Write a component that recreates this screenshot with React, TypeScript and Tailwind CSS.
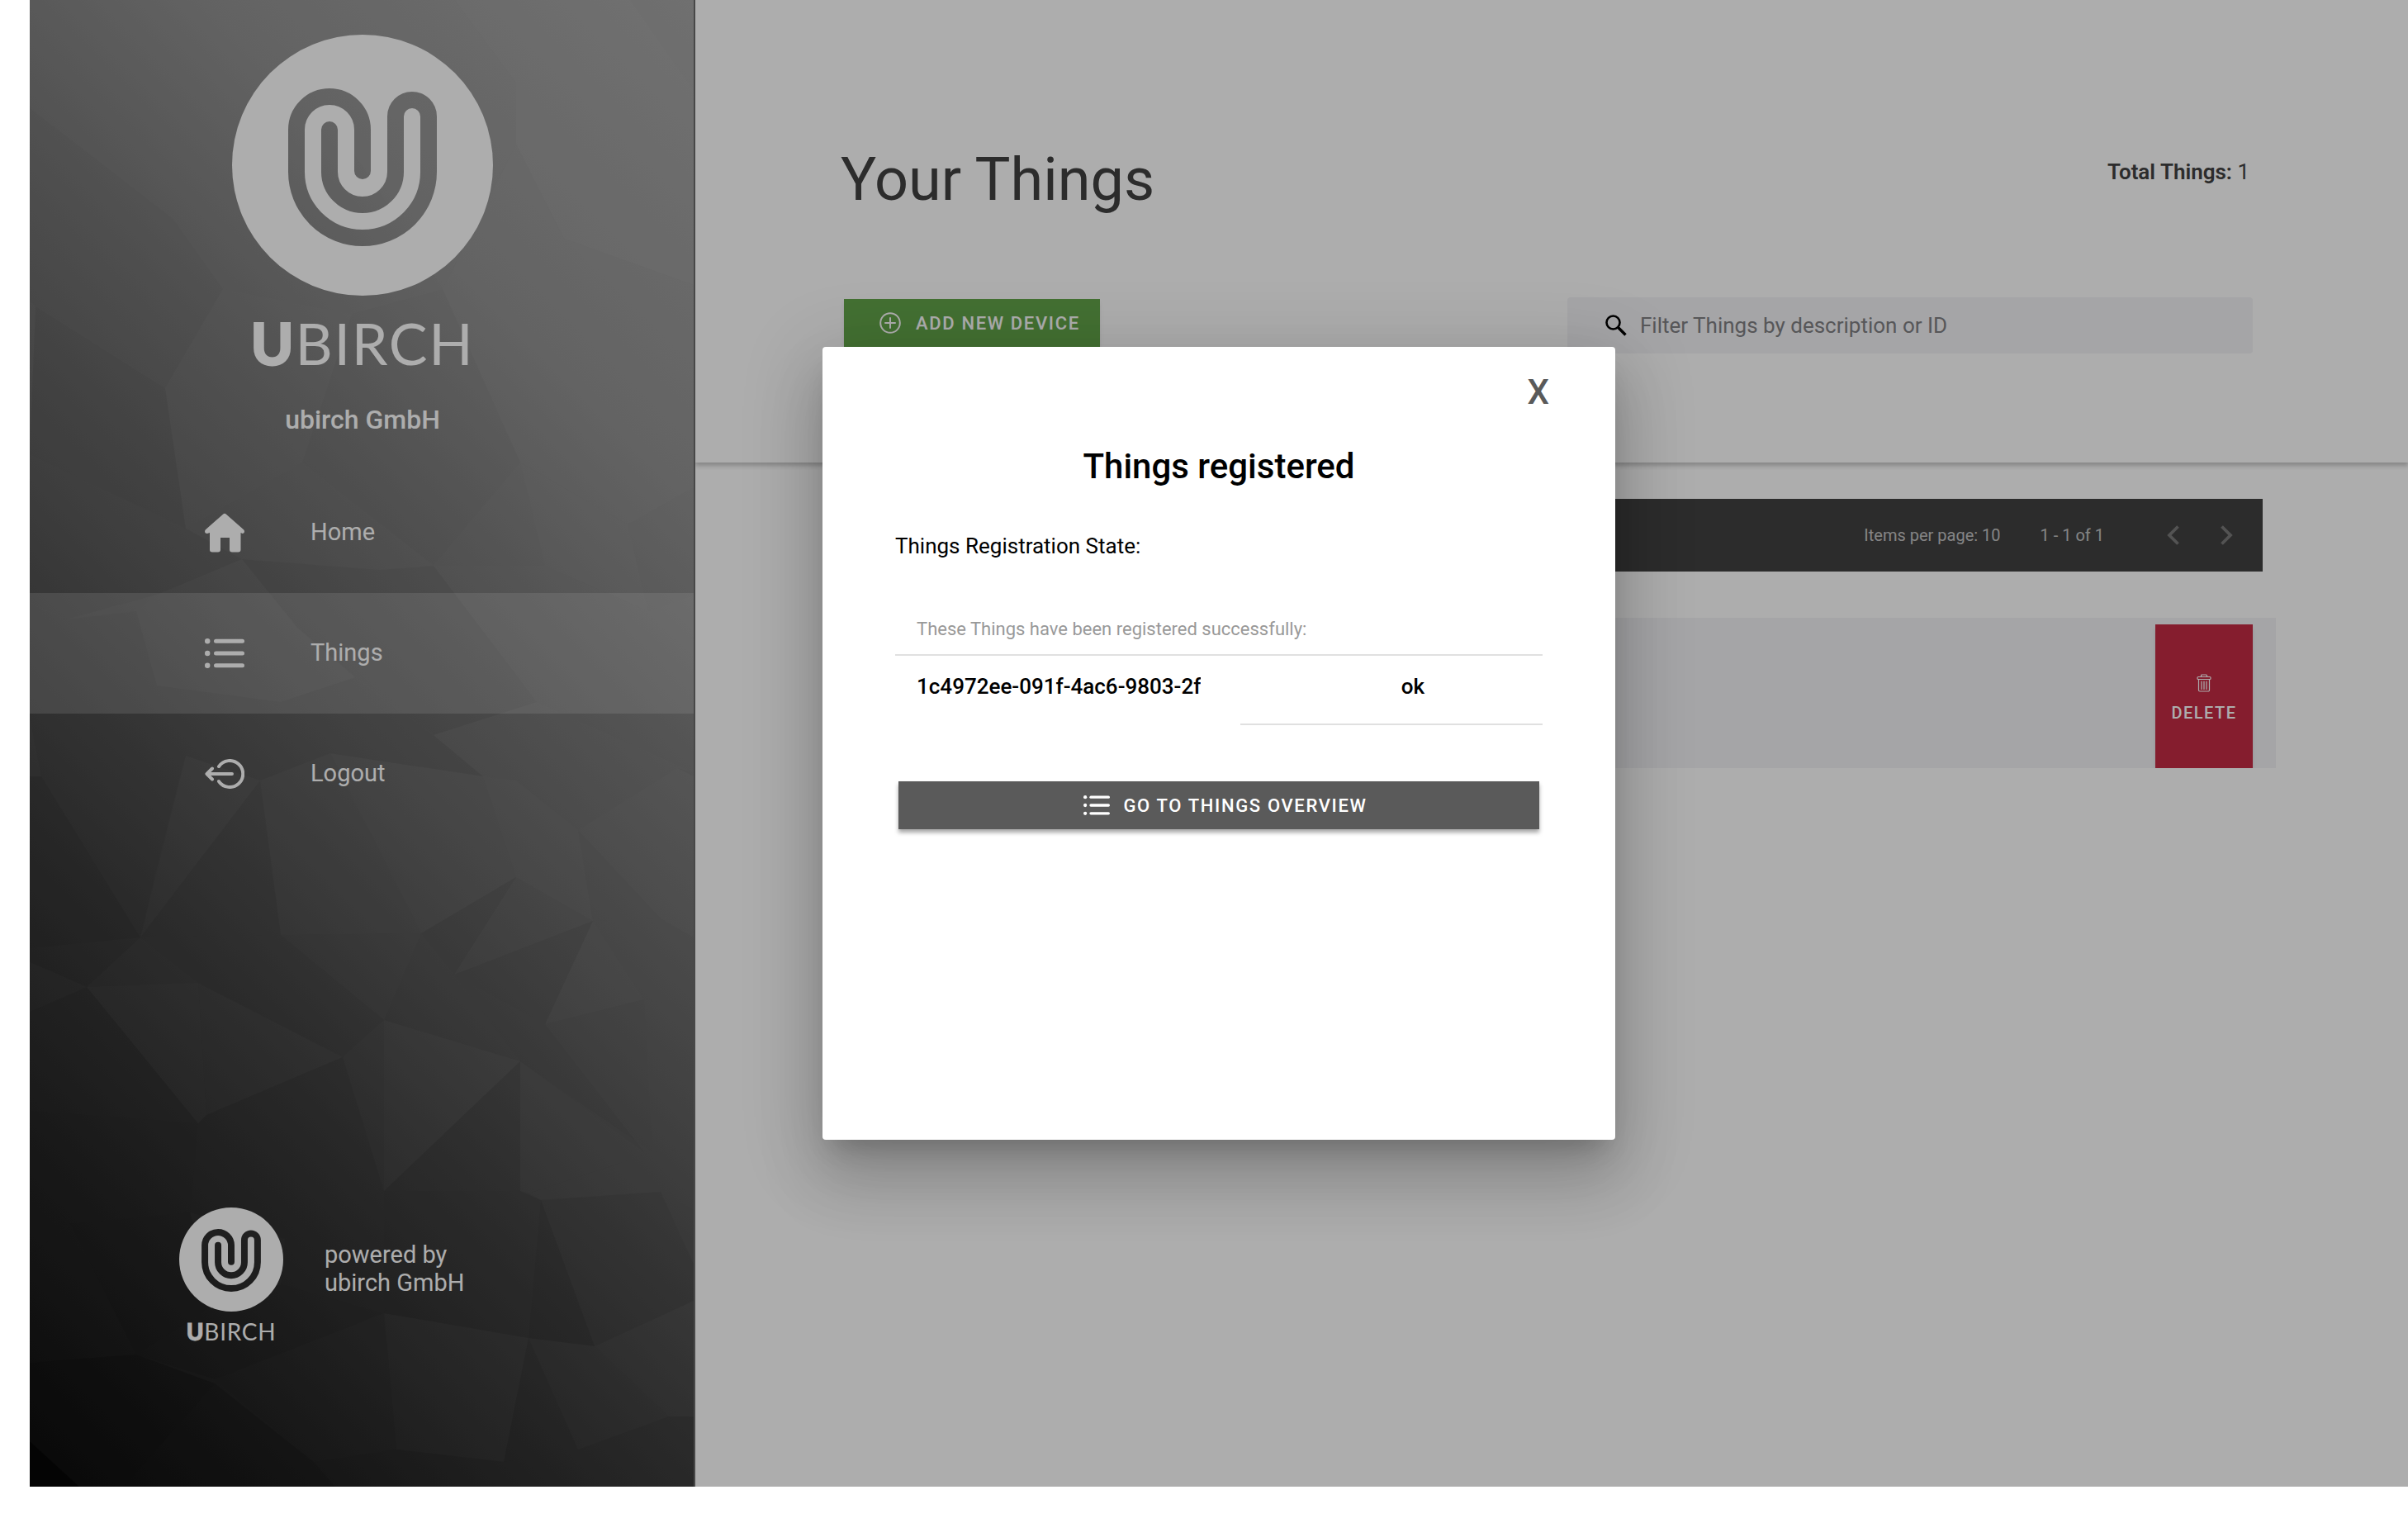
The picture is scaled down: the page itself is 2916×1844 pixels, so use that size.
import { useId } from "react";

const BRAND_TEXT = "font-['Lato'] tracking-wide text-white";

function LogoMark({ className }: { className: string }) {
  const id = useId();
  return (
    <svg viewBox="0 0 316 316" className={className} aria-hidden="true">
      <mask id={id}>
        <circle cx="158" cy="158" r="158" fill="white" />
        <path
          d="M118 115V166A40 40 0 0 0 198 166V99A20 20 0 0 1 238 99V166A80 80 0 0 1 78 166V115A40 40 0 0 1 158 115V165"
          fill="none"
          stroke="black"
          strokeWidth="20"
          strokeLinecap="round"
        />
      </mask>
      <rect width="316" height="316" fill="white" mask={`url(#${id})`} />
    </svg>
  );
}

function HomeIcon({ className }: { className: string }) {
  return (
    <svg viewBox="0 0 48 48" className={className} fill="currentColor" aria-hidden="true">
      <path d="M24 .8C24.700 .8 25.400 1.100 26 1.700L47 20.300C48.800 22 48 25 45.500 25L43.500 24V44.500C43.500 46.500 42.500 47.500 40.500 47.500H33C31 47.500 30 46.500 30 44.500V30H19V44.500C19 46.500 18 47.500 16 47.500H9C7 47.500 6 46.500 6 44.500V24L3 25C0 25.300-.8 22 1 20.300L22 1.700C22.600 1.100 23.300 .8 24 .8Z" />
    </svg>
  );
}

function ListIcon({ className }: { className: string }) {
  return (
    <svg viewBox="0 0 48 36" className={className} fill="currentColor" aria-hidden="true">
      <circle cx="3.200" cy="3.200" r="3.200" />
      <circle cx="3.200" cy="18" r="3.200" />
      <circle cx="3.200" cy="32.800" r="3.200" />
      <rect x="11" y="0.700" width="37" height="5" rx="2.500" />
      <rect x="11" y="15.500" width="37" height="5" rx="2.500" />
      <rect x="11" y="30.300" width="37" height="5" rx="2.500" />
    </svg>
  );
}

function LogoutIcon({ className }: { className: string }) {
  return (
    <svg viewBox="0 0 48 36" className={className} fill="none" stroke="currentColor" strokeWidth="4" strokeLinecap="round" strokeLinejoin="round" aria-hidden="true">
      <path d="M17 9A16 16 0 1 1 17 27" />
      <path d="M33 18H3M9 11.500L2.500 18L9 24.500" />
    </svg>
  );
}

function PlusCircleIcon({ className }: { className: string }) {
  return (
    <svg viewBox="0 0 26 26" className={className} fill="none" stroke="currentColor" strokeWidth="2" strokeLinecap="round" aria-hidden="true">
      <circle cx="13" cy="13" r="11.800" />
      <path d="M13 7V19M7 13H19" />
    </svg>
  );
}

function SearchIcon({ className }: { className: string }) {
  return (
    <svg viewBox="0 0 26 26" className={className} fill="none" stroke="currentColor" strokeWidth="2.600" aria-hidden="true">
      <circle cx="9.500" cy="9.500" r="8" />
      <path d="M15.500 15.500L24.500 24.500" strokeWidth="3.400" />
    </svg>
  );
}

function TrashIcon({ className }: { className: string }) {
  return (
    <svg viewBox="0 0 18 22" className={className} fill="none" stroke="currentColor" strokeWidth="1.200" strokeLinecap="round" strokeLinejoin="round" aria-hidden="true">
      <rect x="1" y="3.500" width="16" height="3" rx="1" />
      <path d="M5.500 3.500V2A1 1 0 0 1 6.500 1H11.500A1 1 0 0 1 12.500 2V3.500" />
      <path d="M2.500 6.500V19.500A1.500 1.500 0 0 0 4 21H14A1.500 1.500 0 0 0 15.500 19.500V6.500" />
      <path d="M6 9V18.500M9 9V18.500M12 9V18.500" />
    </svg>
  );
}

function Chevron({ d }: { d: string }) {
  return (
    <svg viewBox="0 0 16 24" className="h-6 w-4" fill="none" stroke="currentColor" strokeWidth="3.800" aria-hidden="true">
      <path d={d} />
    </svg>
  );
}

type Facet = [points: string, tone: "light" | "dark", opacity: number];

const FACETS: Facet[] = [
  ["234,0 515,0 589,100 589,175 500,350 309,60", "light", 0.01],
  ["515,0 727,0 804,110 804,345 647,289 589,175 589,100", "light", 0.04],
  ["727,0 804,0 804,110", "light", 0.02],
  ["7,136 174,265 234,350 164,470 7,371 0,365 0,130", "dark", 0.02],
  ["234,350 390,380 330,560 189,640 164,470", "light", 0.01],
  ["647,289 804,345 804,590 724,635 594,560 500,350 589,175", "light", 0.02],
  ["7,371 164,470 189,640 21,560 0,550", "dark", 0.05],
  ["390,380 500,350 594,560 489,685 330,560", "dark", 0.01],
  ["21,560 189,640 257,677 154,720 44,750 0,730 0,550", "dark", 0.04],
  ["257,677 424,690 489,685 614,850 489,890 394,820 324,760", "dark", 0.04],
  ["489,685 624,685 749,740 804,720 804,935 614,850", "light", 0.01],
  ["624,685 594,560 724,635 749,740", "light", 0.02],
  ["154,720 257,677 324,760 394,820 304,850 154,830 129,740", "light", 0.01],
  ["44,750 129,740 154,830 304,850 189,915 14,940 0,870 0,730", "dark", 0.04],
  ["304,850 394,820 489,890 549,940 364,912 279,945 189,915", "dark", 0.04],
  ["489,890 614,850 804,935 784,930 664,1005 589,945 549,940", "light", 0.02],
  ["14,940 189,915 154,1050 134,1135", "dark", 0.04],
  ["0,940 14,940 134,1135 0,1148", "dark", 0.1],
  ["189,915 279,945 134,1135", "light", 0.01],
  ["279,945 304,1132 134,1135", "dark", 0.04],
  ["279,945 364,912 474,1130 304,1132", "light", 0.01],
  ["364,912 549,940 589,1062 474,1130", "light", 0.02],
  ["549,940 589,945 664,1005 682,1115 589,1062", "light", 0.03],
  ["664,1005 764,1112 682,1115", "light", 0.01],
  ["664,1005 784,930 804,940 804,1135 764,1112", "light", 0.03],
  ["474,1130 589,1062 514,1180", "dark", 0.04],
  ["589,1062 682,1115 514,1180", "light", 0.01],
  ["514,1180 682,1115 624,1240", "dark", 0.04],
  ["682,1115 744,1210 624,1240", "light", 0.02],
  ["682,1115 764,1112 804,1135 804,1220 744,1210", "light", 0.01],
  ["474,1130 514,1180 594,1285 429,1235", "dark", 0.02],
  ["514,1180 624,1240 744,1395 594,1285", "dark", 0.03],
  ["744,1210 804,1220 804,1390 754,1395", "light", 0.01],
  ["134,1135 304,1132 429,1235 379,1280 204,1190", "dark", 0.03],
  ["0,1148 134,1135 69,1195 0,1165", "dark", 0.06],
  ["69,1195 204,1190 214,1350 204,1360", "light", 0.02],
  ["0,1225 69,1195 204,1360 0,1345", "dark", 0.06],
  ["204,1190 379,1280 214,1350", "light", 0.01],
  ["214,1350 379,1280 429,1442", "dark", 0.06],
  ["429,1235 594,1285 429,1442", "light", 0.02],
  ["594,1285 594,1442 429,1442", "dark", 0.06],
  ["594,1285 754,1395 604,1445 594,1442", "light", 0.01],
  ["0,1345 204,1360 194,1468 49,1482 0,1430", "dark", 0.08],
  ["204,1360 214,1350 429,1442 309,1500 194,1468", "dark", 0.06],
  ["604,1445 754,1395 804,1390 804,1465 764,1443 619,1453", "light", 0.01],
  ["0,1430 49,1482 0,1520", "dark", 0.06],
  ["49,1482 194,1468 224,1580 129,1640", "dark", 0.1],
  ["0,1520 49,1482 129,1640 0,1650", "dark", 0.06],
  ["309,1500 429,1442 429,1590 304,1555", "dark", 0.06],
  ["429,1442 594,1442 619,1453 604,1620 429,1590", "dark", 0.08],
  ["619,1453 684,1630 604,1620", "dark", 0.12],
  ["619,1453 764,1443 804,1530 804,1575 684,1630", "dark", 0.04],
  ["129,1640 224,1580 304,1555 429,1590 224,1670", "dark", 0.08],
  ["0,1650 129,1640 224,1675 114,1800 60,1800 0,1745", "dark", 0.18],
  ["0,1745 60,1800 0,1800", "dark", 0.6],
  ["224,1670 429,1590 444,1755 344,1770", "dark", 0.02],
  ["114,1800 224,1675 344,1770 370,1800", "dark", 0.14],
  ["429,1590 604,1620 574,1770 444,1755", "light", 0.01],
  ["604,1620 664,1755 574,1770", "dark", 0.06],
  ["684,1630 804,1575 804,1715 774,1715", "light", 0.01],
  ["344,1770 444,1755 574,1770 664,1755 774,1715 804,1715 804,1800 370,1800", "dark", 0.06],
];

function FacetBackdrop() {
  return (
    <svg viewBox="0 0 804 1800" preserveAspectRatio="none" className="absolute inset-0 size-full" aria-hidden="true">
      {FACETS.map(([points, tone, opacity]) => (
        <polygon key={points} points={points} fill={tone === "light" ? "white" : "black"} fillOpacity={opacity} />
      ))}
    </svg>
  );
}

const NAV = [
  { label: "Home", Icon: HomeIcon, size: "size-12", active: false },
  { label: "Things", Icon: ListIcon, size: "h-9 w-12", active: true },
  { label: "Logout", Icon: LogoutIcon, size: "h-9 w-12", active: false },
];

function Sidebar() {
  return (
    <aside className="relative flex w-[806px] shrink-0 flex-col border-r-2 border-[#6a6a6a] bg-[linear-gradient(45deg,#101010,#242424_14%,#404040_31%,#606060_48%,#777777_62%,#919191_77%,#a4a4a4)] text-white">
      <FacetBackdrop />
      <div className="relative flex grow flex-col">
        <div className="flex flex-col items-center pt-[42px] pl-0.5">
          <LogoMark className="size-[316px]" />
          <div className={`${BRAND_TEXT} mt-4 text-[70px] leading-[82px]`}>
            <span className="font-black [-webkit-text-stroke:2px_white]">U</span>BIRCH
          </div>
          <p className="mt-8 text-[32px] leading-10 font-medium">ubirch GmbH</p>
        </div>
        <nav className="mt-11">
          {NAV.map(({ label, Icon, size, active }) => (
            <a
              key={label}
              href="#"
              className={`flex h-[146px] items-center gap-20 pl-[212px] text-[29px] ${active ? "bg-white/18" : ""}`}
            >
              <Icon className={size} />
              {label}
            </a>
          ))}
        </nav>
        <div className="mt-auto mb-[172px] flex items-start gap-[50px] pl-[181px]">
          <div className="flex flex-col items-center">
            <LogoMark className="size-[126px]" />
            <div className={`${BRAND_TEXT} mt-2 text-[28px] leading-8`}>
              <span className="font-black [-webkit-text-stroke:1px_white]">U</span>BIRCH
            </div>
          </div>
          <p className="mt-10 text-[29px] leading-[34px]">
            powered by
            <br />
            ubirch GmbH
          </p>
        </div>
      </div>
    </aside>
  );
}

function Things() {
  return (
    <main className="flex min-w-0 grow flex-col text-[#424242]">
      <header className="h-[560px] pr-[188px] pl-44 shadow-[0_4px_5px_rgba(0,0,0,0.22)]">
        <div className="flex items-start justify-between pt-[176px] pr-1">
          <h1 className="text-[72px] leading-[84px]">Your Things</h1>
          <p className="mt-4 text-[26px] leading-8">
            <b className="font-semibold">Total Things:</b> 1
          </p>
        </div>
        <div className="mt-[100px] flex items-start justify-between">
          <button className="mt-0.5 ml-1 flex h-[58px] w-[310px] items-center gap-[18px] bg-[#64a54b] pl-[43px] text-[22px] font-medium tracking-[0.075em] whitespace-nowrap text-white shadow-md">
            <PlusCircleIcon className="size-[26px]" />
            ADD NEW DEVICE
          </button>
          <label className="flex h-[68px] w-[830px] items-center gap-4 rounded bg-[#f3f3f6] pl-[46px]">
            <SearchIcon className="size-[26px] text-black" />
            <input
              type="text"
              aria-label="Filter Things"
              placeholder="Filter Things by description or ID"
              className="grow bg-transparent text-[26px] outline-none placeholder:text-[#808084]"
            />
          </label>
        </div>
      </header>
      <div className="mt-11 mr-44 ml-[178px] flex h-[88px] items-center justify-end bg-[#424242] pr-9 text-[20px] text-white/70">
        <span>Items per page: 10</span>
        <span className="ml-12">1 - 1 of 1</span>
        <button aria-label="Previous page" className="ml-[76px] text-white/30">
          <Chevron d="M13.500 1.500L3 12L13.500 22.500" />
        </button>
        <button aria-label="Next page" className="ml-12 text-white/30">
          <Chevron d="M2.500 1.500L13 12L2.500 22.500" />
        </button>
      </div>
      <div className="mt-14 mr-40 ml-[178px] flex h-[182px] justify-end overflow-hidden bg-[#f3f3f6] pt-2 pr-7">
        <button className="flex w-[118px] flex-col items-center justify-center gap-2.5 bg-[#c52b45] pt-2 text-[20px] font-medium tracking-[0.075em] text-white shadow-md">
          <TrashIcon className="h-[22px] w-[18px]" />
          DELETE
        </button>
      </div>
    </main>
  );
}

function RegisteredDialog() {
  return (
    <div
      role="dialog"
      aria-labelledby="dialog-title"
      className="flex h-[960px] w-[960px] flex-col rounded-[4px] bg-white px-[88px] pt-[30px] text-black shadow-[0_22px_30px_-14px_rgba(0,0,0,0.2),0_48px_76px_6px_rgba(0,0,0,0.14),0_18px_92px_16px_rgba(0,0,0,0.12)]"
    >
      <button aria-label="Close" className="mr-[-12px] self-end px-1 text-[42px] leading-[50px] font-medium text-[#5a5a5a]">
        X
      </button>
      <h2 id="dialog-title" className="mt-10 text-center text-[42px] leading-[50px] font-medium">
        Things registered
      </h2>
      <p className="mt-[55px] text-[26px] leading-8">Things Registration State:</p>
      <table className="mt-[54px] w-full table-fixed border-collapse">
        <colgroup>
          <col className="w-[418px]" />
          <col />
        </colgroup>
        <thead>
          <tr className="h-[62px] border-b-2 border-[#e0e0e0]">
            <th colSpan={2} className="pl-[26px] text-left text-[22px] font-normal text-[#999]">
              These Things have been registered successfully:
            </th>
          </tr>
        </thead>
        <tbody>
          <tr className="h-[84px] align-top text-[26px] leading-8 font-medium">
            <td className="pt-[21px] pr-12 pl-[26px]">
              <div className="overflow-hidden whitespace-nowrap">1c4972ee-091f-4ac6-9803-2ff</div>
            </td>
            <td className="border-b-2 border-[#e0e0e0] pt-[21px] pl-[52px] text-center">ok</td>
          </tr>
        </tbody>
      </table>
      <button className="mx-1 mt-[68px] flex h-[58px] items-center justify-center gap-4 bg-[#5a5a5a] pl-4 text-[22px] font-medium tracking-[0.075em] text-white shadow-[0_4px_5px_rgba(0,0,0,0.35)]">
        <ListIcon className="h-6 w-8" />
        GO TO THINGS OVERVIEW
      </button>
    </div>
  );
}

export default function App() {
  return (
    <div className="flex min-h-screen bg-white pb-11 pl-9 font-['Roboto',sans-serif]">
      <div className="relative flex grow bg-white">
        <Sidebar />
        <Things />
        <div className="absolute inset-0 flex items-center justify-center bg-black/32">
          <RegisteredDialog />
        </div>
      </div>
    </div>
  );
}
